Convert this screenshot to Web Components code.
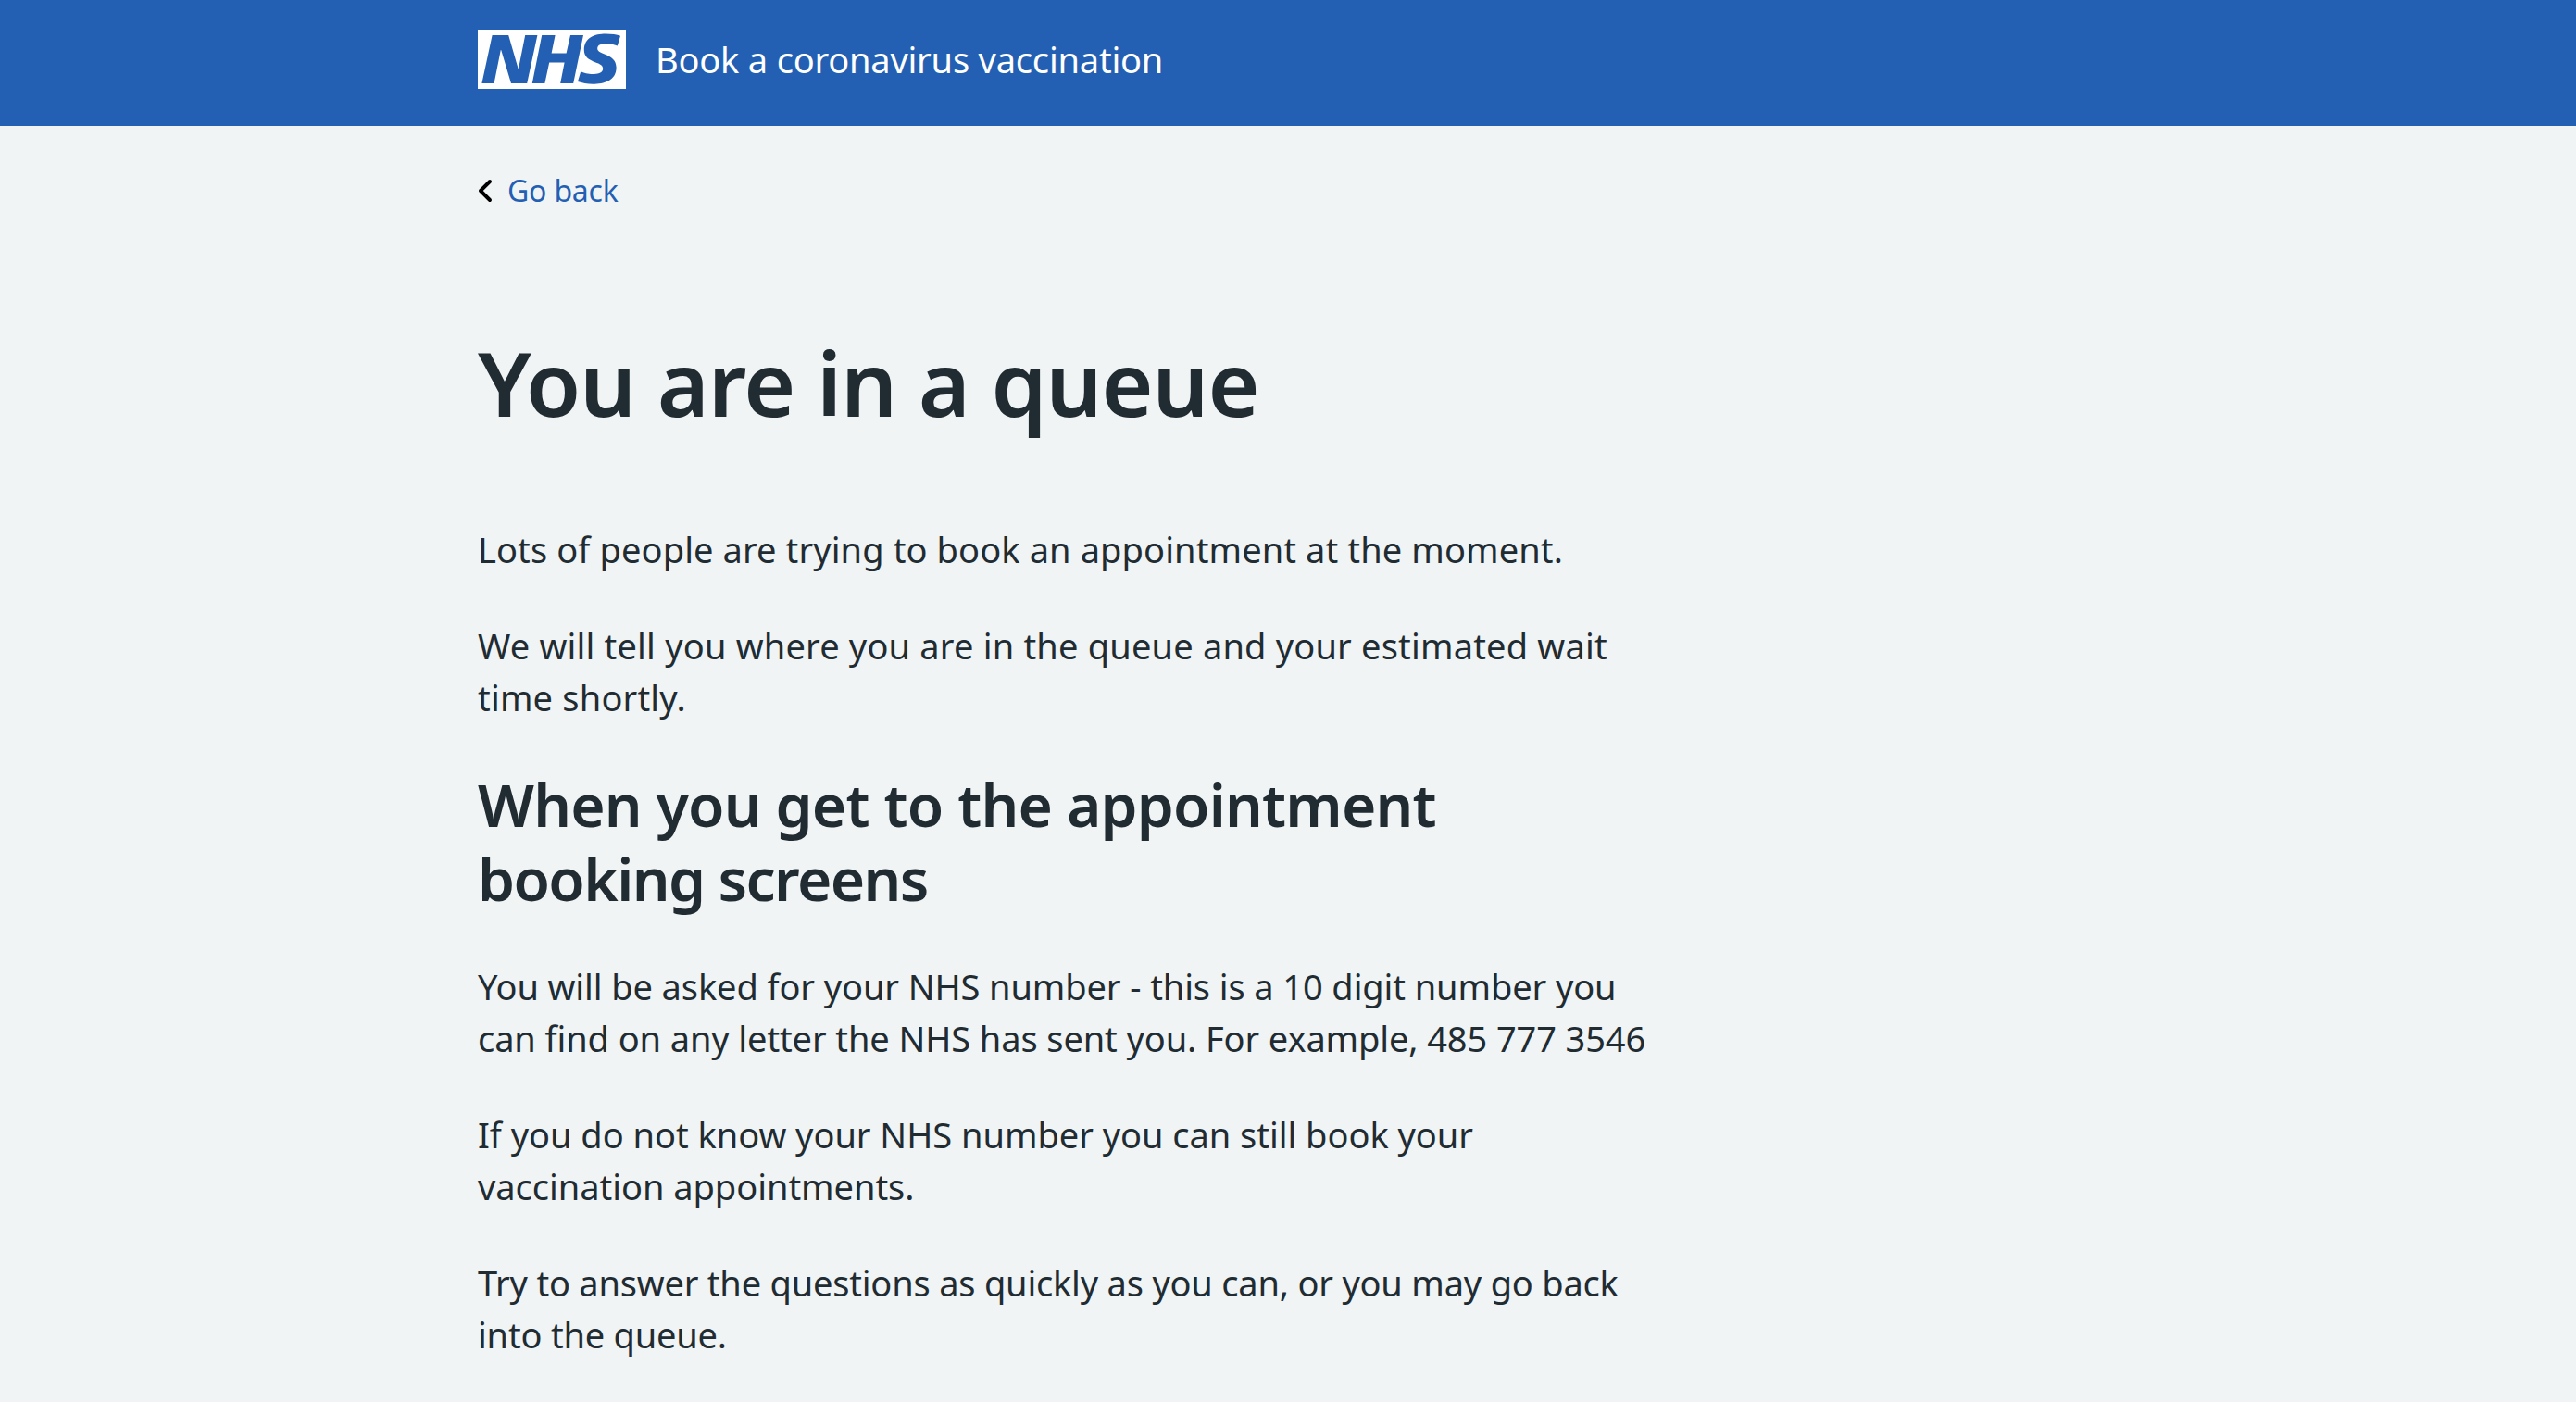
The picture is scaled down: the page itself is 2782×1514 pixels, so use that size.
<!DOCTYPE html>
<html lang="en">
<head>
<meta charset="utf-8">
<title>Book a coronavirus vaccination</title>
<style>
	html,body{margin:0;padding:0;background:#f0f4f5;}
	body{font-family:"Noto Sans","Open Sans",sans-serif;color:#212b32;height:1514px;overflow:hidden;}
</style>
</head>
<body>
<nhs-header>Book a coronavirus vaccination</nhs-header>
<page-main>
	<back-link>Go back</back-link>
	<page-heading level="1">You are in a queue</page-heading>
	<body-text style="letter-spacing:.11px">Lots of people are trying to book an appointment at the moment.</body-text>
	<body-text style="letter-spacing:.19px">We will tell you where you are in the queue and your estimated wait time shortly.</body-text>
	<page-heading level="2">When you get to the appointment <span style="letter-spacing:-1.6px">booking screens</span></page-heading>
	<body-text style="letter-spacing:-.1px">You will be asked for your NHS number - this is a 10 digit number you can find on any letter the NHS has sent you. For example, 485 777 3546</body-text>
	<body-text style="letter-spacing:-.03px">If you do not know your NHS number you can still book your vaccination appointments.</body-text>
	<body-text style="letter-spacing:-.2px">Try to answer the questions as quickly as you can, or you may go back into the queue.</body-text>
</page-main>
<script>
const headerTemplate = document.createElement("template");
headerTemplate.innerHTML = `
	<style>
		:host{display:flex;align-items:flex-start;box-sizing:border-box;height:136px;background:#235fb2;padding:32px 0 0 516px;color:#fff;}
		svg{width:160px;height:64px;flex:none;display:block;}
		.title{margin-left:32px;font-size:38px;letter-spacing:-.2px;line-height:64px;}
	</style>
	<svg viewBox="0 0 40 16" role="img" aria-label="NHS">
		<path fill="#fff" d="M0 0h40v16H0z"></path>
		<path fill="#235fb2" d="M3.9 1.5h4.4l2.6 9h.1l1.8-9h3.3l-2.8 13H9l-2.7-9h-.1l-1.8 9H1.1M17.3 1.5h3.6l-1 4.9h4L25 1.5h3.5l-2.7 13h-3.5l1.1-5.6h-4.1l-1.2 5.6h-3.4M37.7 4.4c-.7-.3-1.6-.6-2.9-.6-1.4 0-2.5.2-2.5 1.3 0 1.8 5.1 1.2 5.1 5.1 0 3.6-3.3 4.5-6.4 4.5-1.3 0-2.9-.3-4-.7l.8-2.7c.7.4 2.1.7 3.2.7s2.8-.2 2.8-1.5c0-2.1-5.1-1.3-5.1-5 0-3.4 2.9-4.4 5.8-4.4 1.6 0 3.1.2 4 .6"></path>
	</svg>
	<span class="title"><slot></slot></span>
`;
class NhsHeader extends HTMLElement{
	constructor(){
		super();
		this.attachShadow({mode:"open"}).appendChild(headerTemplate.content.cloneNode(true));
	}
}
customElements.define("nhs-header",NhsHeader);

const mainTemplate = document.createElement("template");
mainTemplate.innerHTML = `
	<style>
		:host{display:block;padding:46px 0 0 516px;width:1270px;}
	</style>
	<slot></slot>
`;
class PageMain extends HTMLElement{
	constructor(){
		super();
		this.attachShadow({mode:"open"}).appendChild(mainTemplate.content.cloneNode(true));
	}
}
customElements.define("page-main",PageMain);

const backTemplate = document.createElement("template");
backTemplate.innerHTML = `
	<style>
		:host{display:flex;align-items:center;height:48px;color:#235fb2;font-size:32px;line-height:48px;letter-spacing:-.2px;}
		svg{width:48px;height:48px;margin-left:-16px;margin-right:-16px;flex:none;}
		a{color:inherit;text-decoration:none;margin-left:16px;}
	</style>
	<svg viewBox="0 0 24 24"><path fill="#000" d="M8.5 12c0-.3.1-.5.3-.7l5-5c.4-.4 1-.4 1.4 0s.4 1 0 1.4L10.9 12l4.3 4.3c.4.4.4 1 0 1.4s-1 .4-1.4 0l-5-5c-.2-.2-.3-.4-.3-.7z"></path></svg>
	<a href="#"><slot></slot></a>
`;
class BackLink extends HTMLElement{
	constructor(){
		super();
		this.attachShadow({mode:"open"}).appendChild(backTemplate.content.cloneNode(true));
	}
}
customElements.define("back-link",BackLink);

const headingTemplate = document.createElement("template");
headingTemplate.innerHTML = `
	<style>
		:host{display:block;font-weight:600;}
		:host([level="1"]){font-size:96px;line-height:112px;letter-spacing:-1.2px;margin:127px 0 96px;}
		:host([level="2"]){font-size:64px;line-height:80px;letter-spacing:-.8px;margin:46px 0 48px;}
	</style>
	<slot></slot>
`;
class PageHeading extends HTMLElement{
	constructor(){
		super();
		this.attachShadow({mode:"open"}).appendChild(headingTemplate.content.cloneNode(true));
	}
}
customElements.define("page-heading",PageHeading);

const textTemplate = document.createElement("template");
textTemplate.innerHTML = `
	<style>
		:host{display:block;font-size:38px;line-height:56px;margin:0 0 48px;}
	</style>
	<slot></slot>
`;
class BodyText extends HTMLElement{
	constructor(){
		super();
		this.attachShadow({mode:"open"}).appendChild(textTemplate.content.cloneNode(true));
	}
}
customElements.define("body-text",BodyText);
</script>
</body>
</html>
